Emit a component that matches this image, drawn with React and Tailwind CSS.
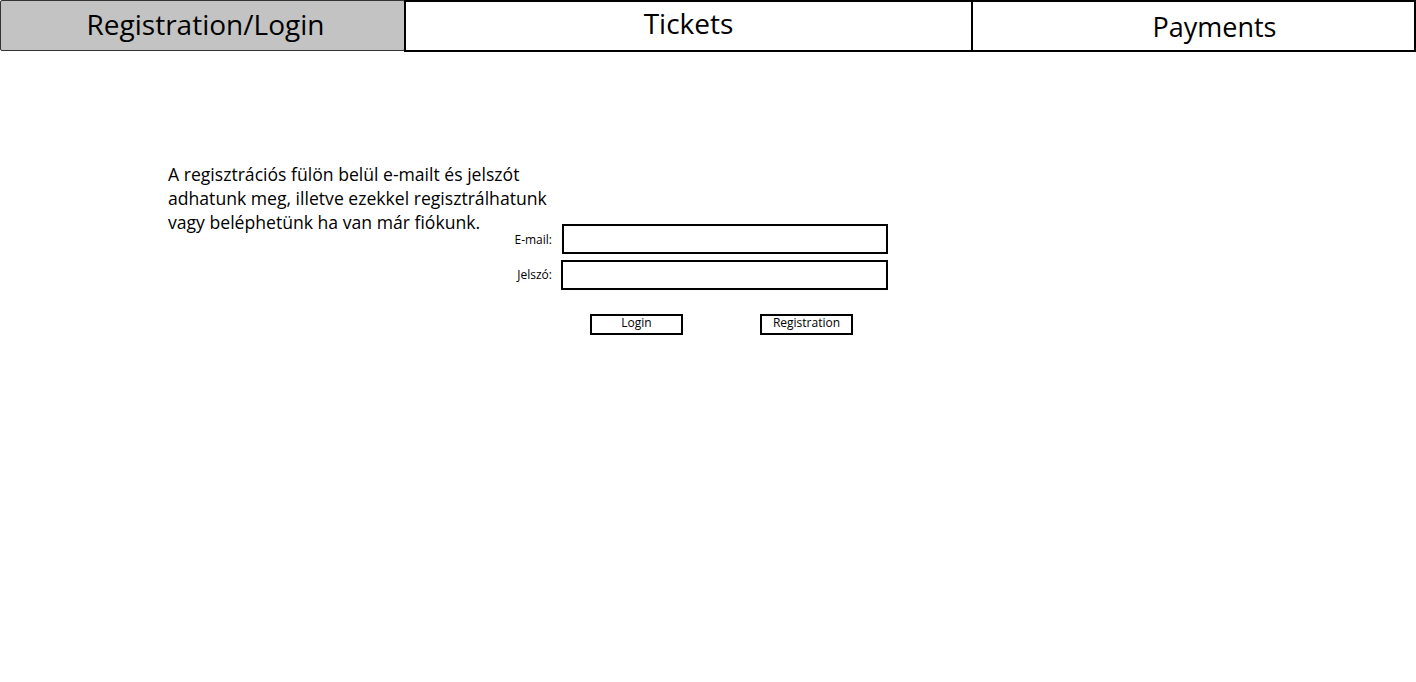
import React from "react";

const font = { fontFamily: '"Open Sans", "Noto Sans", sans-serif' };

const App = () => {
  return (
    <div className="w-[1416px] h-[682px] bg-white text-black" style={font}>
      <div className="flex h-[52px]">
        <div className="w-[405px] h-[51px] bg-[#c3c3c3] border border-[#333] rounded-[2px] flex items-center justify-center pl-[6px] pb-[3px] text-[28px]">
          Registration/Login
        </div>
        <div className="w-[569px] h-[52px] border-2 border-black -ml-[1px] flex items-center justify-center pb-[6px] text-[28px]">
          Tickets
        </div>
        <div className="flex-1 h-[52px] border-2 border-black -ml-[2px] flex items-center justify-center pl-[42px] pt-[3px] text-[27px]">
          Payments
        </div>
      </div>

      <div className="flex items-start pl-[168px] pt-[110px]">
        <p className="w-[386px] shrink-0 text-[17.6px] leading-[24px]">
          A regisztrációs fülön belül e-mailt és jelszót adhatunk meg, illetve ezekkel regisztrálhatunk vagy beléphetünk ha van már fiókunk.
        </p>

        <div className="-ml-[54px] mt-[62px] text-[12px]">
          <div className="flex items-center gap-[10px]">
            <label className="w-[52px] text-right leading-[12px] pt-[2px]">E-mail:</label>
            <input type="text" className="w-[326px] h-[30px] border-2 border-black outline-none" />
          </div>
          <div className="flex items-center gap-[9px] mt-[6px]">
            <label className="w-[52px] text-right leading-[12px]">Jelszó:</label>
            <input type="password" className="w-[327px] h-[30px] border-2 border-black outline-none" />
          </div>
          <div className="flex gap-[77px] pl-[90px] mt-[24px]">
            <button className="w-[93px] h-[21px] border-2 border-black text-[12px] leading-[14px] flex justify-center">
              Login
            </button>
            <button className="w-[93px] h-[21px] border-2 border-black text-[12px] leading-[14px] flex justify-center">
              Registration
            </button>
          </div>
        </div>
      </div>
    </div>
  );
};

export default App;
